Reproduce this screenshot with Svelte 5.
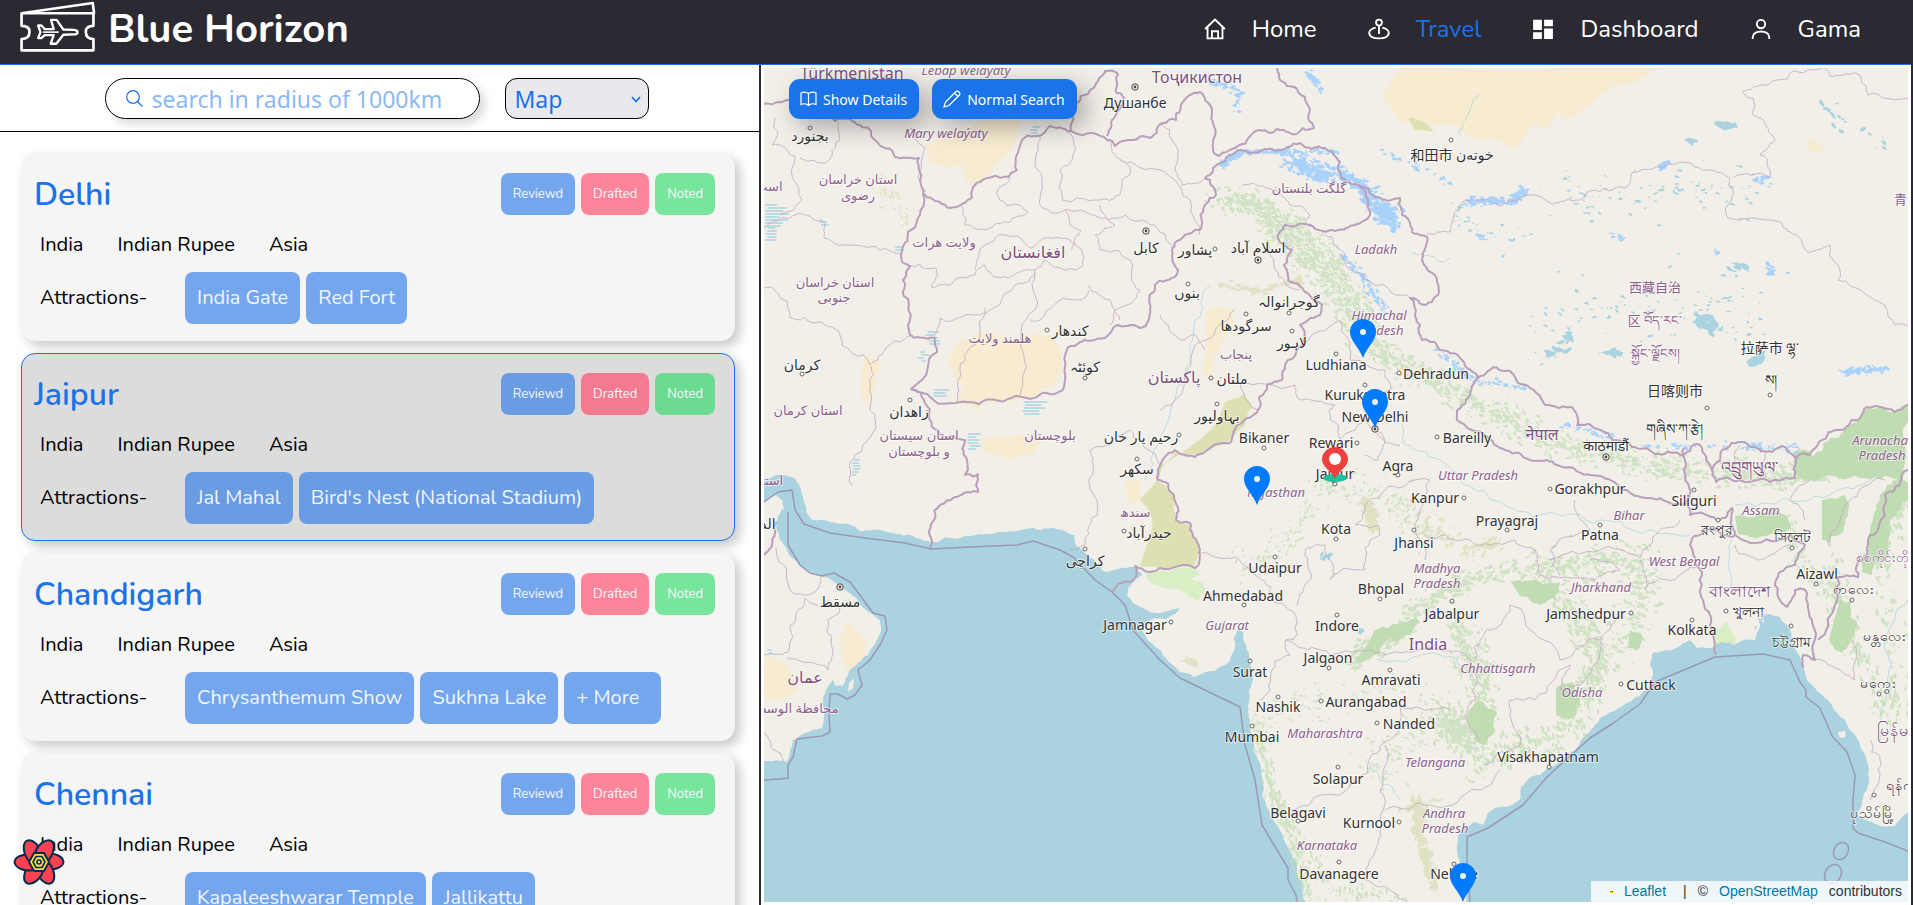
<script>
  const nav = [
    { label: 'Home', icon: 'home' },
    { label: 'Travel', icon: 'travel', active: true },
    { label: 'Dashboard', icon: 'dashboard' },
    { label: 'Gama', icon: 'user' }
  ];

  const places = [
    { name: 'Delhi', attractions: ['India Gate', 'Red Fort'] },
    { name: 'Jaipur', attractions: ['Jal Mahal', "Bird's Nest (National Stadium)"], selected: true },
    { name: 'Chandigarh', attractions: ['Chrysanthemum Show', 'Sukhna Lake'], more: true },
    { name: 'Chennai', attractions: ['Kapaleeshwarar Temple', 'Jallikattu'] }
  ];

  // Seeded generator, so the terrain is the same on every load.
  let seed = 7;
  function rnd() {
    seed = (seed * 16807) % 2147483647;
    return seed / 2147483647;
  }
  const jitter = (n) => (rnd() - 0.5) * 2 * n;

  function points(s) {
    return s.trim().split(/\s+/).map((p) => p.split(',').map(Number));
  }

  // Turns a coarse polyline into a line with natural-looking bends.
  function rough(s, amount = 1) {
    let pts = points(s);
    for (let k = 0; k < 3; k++) {
      const next = [pts[0]];
      for (let i = 1; i < pts.length; i++) {
        const [ax, ay] = pts[i - 1];
        const [bx, by] = pts[i];
        const len = Math.hypot(bx - ax, by - ay);
        if (len > 4) {
          const a = Math.min(len * 0.18, 4) * amount;
          next.push([(ax + bx) / 2 + jitter(a), (ay + by) / 2 + jitter(a)]);
        }
        next.push([bx, by]);
      }
      pts = next;
    }
    return 'M' + pts.map(([x, y]) => x.toFixed(1) + ' ' + y.toFixed(1)).join('L');
  }

  function blob(x, y, size, angle) {
    const n = 7;
    const out = [];
    const c = Math.cos(angle);
    const s = Math.sin(angle);
    for (let i = 0; i < n; i++) {
      const t = (i / n) * Math.PI * 2;
      const r = size * (0.45 + rnd() * 0.8);
      const px = Math.cos(t) * r * 1.5;
      const py = Math.sin(t) * r * 0.7;
      out.push((x + px * c - py * s).toFixed(1) + ' ' + (y + px * s + py * c).toFixed(1));
    }
    return 'M' + out.join('L') + 'Z';
  }

  // Scatters blobs along a polyline, inside a band of the given width.
  function strip(s, width, count, size, angle = 0.6) {
    const pts = points(s);
    let d = '';
    for (let i = 0; i < count; i++) {
      const f = rnd() * (pts.length - 1);
      const k = Math.floor(f);
      const t = f - k;
      const b = pts[Math.min(k + 1, pts.length - 1)];
      const x = pts[k][0] + (b[0] - pts[k][0]) * t + jitter(width) * rnd();
      const y = pts[k][1] + (b[1] - pts[k][1]) * t + jitter(width) * rnd();
      d += blob(x, y, size * (0.4 + rnd()), angle + jitter(0.7));
    }
    return d;
  }

  const iranIndia =
    '764,478 780,475 792,477 800,486 803,497 806,512 812,520 830,522 848,524 860,531 880,530 910,535 925,541 938,542 945,537 960,538 990,534 1010,531 1040,530 1050,528 1062,530 1075,535 1076,545 1083,551 1090,558 1096,562 1103,571 1115,570 1125,568 1134,567 1143,575 1135,580 1128,588 1127,595 1133,603 1150,612 1160,613 1180,607 1177,612 1168,618 1150,620 1140,628 1160,650 1168,661 1180,672 1194,677 1215,671 1230,660 1235,648 1234,637 1237,630 1243,632 1246,645 1249,655 1251,668 1253,680 1249,690 1248,705 1250,720 1254,740 1258,760 1263,785 1266,805 1277,825 1289,850 1297,865 1303,890 1306,904';
  const eastCoast =
    '1466,904 1460,865 1457,850 1458,838 1463,828 1474,822 1483,825 1487,815 1495,808 1510,806 1520,799 1521,787 1530,777 1548,768 1566,757 1580,742 1595,725 1610,712 1630,702 1640,696 1650,686 1653,675 1650,663 1653,653 1665,650 1680,646 1690,640 1697,648 1712,648 1722,640 1735,644 1755,640 1764,622 1766,614 1780,617 1790,630 1792,645 1799,655 1803,668 1812,685 1822,695 1832,705 1845,720 1850,730 1858,740 1865,755 1868,775 1867,790 1862,805 1858,815 1865,820 1880,826 1895,826 1908,812';
  const mainLand =
    rough(iranIndia, 0.6) + rough(eastCoast, 0.6).replace('M', 'L') + 'L1910 66L762 66Z';
  const oman =
    rough('764,502 775,495 782,500 784,508 776,522 780,540 790,556 805,570 825,577 840,585 855,597 866,610 880,620 881,630 874,645 868,655 855,660 848,675 843,686 835,686 833,680 826,690 823,705 824,715 822,728 805,733 793,740 790,750 786,762 764,761', 0.5) + 'Z';

  const deserts = [
    '926,145 985,120 1020,118 1010,150 990,175 975,184 965,180 962,167 930,165',
    '1382,96 1400,68 1662,68 1640,80 1605,92 1590,105 1568,120 1558,112 1548,130 1535,125 1522,140 1515,150 1500,140 1470,138 1455,125 1430,125 1400,122',
    '948,360 960,340 985,330 1010,340 1040,332 1055,338 1062,355 1062,365 1055,385 1030,398 980,402 980,412 955,402 965,388 955,378',
    '865,355 880,360 882,370 875,372 875,390 868,402 860,395 862,375',
    '982,440 1000,437 1020,434 1042,440 1035,452 1010,460 995,455 985,452',
    '1205,312 1222,306 1234,310 1234,325 1218,350 1210,378 1202,372 1206,340',
    '764,658 778,658 790,670 798,690 782,700 764,702',
    '840,638 848,620 866,640 866,655 848,672 842,660',
    '1808,138 1820,142 1824,150 1812,152 1806,145',
    '1124,482 1140,480 1142,500 1130,505'
  ].map((s) => rough(s, 0.5) + 'Z');

  const scrub = [
    '1147,492 1156,482 1160,466 1185,450 1200,440 1215,425 1225,402 1245,394 1252,408 1245,425 1230,440 1198,455 1175,452 1162,468 1158,480 1174,495 1176,520 1190,525 1200,550 1195,565 1160,569 1140,566 1150,540 1152,518 1140,500',
    '1408,118 1425,122 1434,132 1415,130'
  ].map((s) => rough(s, 0.5) + 'Z');

  const greens = [
    '1793,452 1812,456 1830,438 1850,425 1870,408 1890,412 1908,406 1908,500 1890,520 1880,540 1870,530 1880,500 1898,480 1860,478 1820,480 1796,475',
    '1735,516 1765,514 1785,515 1790,525 1778,535 1755,539 1738,535',
    '1510,580 1535,580 1560,582 1556,600 1540,605 1520,596',
    '1478,700 1492,708 1495,730 1485,745 1470,728 1468,712',
    '1822,500 1845,495 1845,520 1830,548 1822,540',
    '1840,600 1853,600 1850,640 1835,650 1830,635',
    '1875,510 1885,515 1885,560 1872,575 1862,572 1868,540',
    '1556,690 1572,682 1580,700 1568,720 1556,715',
    '1370,640 1400,625 1420,622 1400,640 1375,655 1355,662',
    '1630,630 1642,636 1638,650 1628,648'
  ].map((s) => rough(s, 1.4) + 'Z');

  const limes = [
    '1160,570 1195,566 1200,575 1192,580 1206,588 1198,602 1180,590 1165,588 1150,582 1145,574',
    '1716,632 1728,622 1736,640 1734,646 1716,644'
  ].map((s) => rough(s, 0.8) + 'Z');

  const forest =
    strip('1220,200 1260,205 1285,235 1310,260 1345,310 1375,350 1420,375 1470,400 1530,432 1590,455', 20, 1300, 1.7) +
    strip('1285,215 1330,260 1350,290 1380,340', 20, 340, 1.7) +
    strip('1600,455 1680,470 1780,478 1830,470', 18, 480, 1.8, 0.2) +
    strip('1350,660 1390,640 1430,600 1470,580 1560,560', 16, 380, 2.1, -0.5) +
    strip('1455,625 1480,680 1475,740 1440,720 1490,765 1580,720 1600,650 1560,600', 26, 950, 2.1, 1) +
    strip('1530,590 1580,560 1640,560 1640,620 1580,690', 28, 460, 1.9, 0.3) +
    strip('1255,720 1272,790 1290,830 1310,900', 11, 300, 1.7, 1.4) +
    strip('1300,840 1330,890 1400,900', 16, 120, 1.6, 1.4) +
    strip('1370,780 1400,740 1440,700', 34, 150, 1.4, 0.4) +
    strip('1260,720 1320,700 1390,690', 26, 130, 1.3, 0.2) +
    strip('1830,560 1850,640 1900,720 1880,560 1905,500', 20, 300, 2.1, 1.4) +
    strip('1240,570 1290,540 1330,480', 24, 150, 1.3, -0.8) +
    strip('1320,480 1400,500 1420,530', 28, 140, 1.5, -0.8) +
    strip('1790,520 1800,560 1830,600', 14, 90, 1.6, 1.4);
  const hills =
    strip('1420,800 1420,840 1435,890', 8, 150, 3, 1.5) +
    strip('1410,520 1470,550 1500,540', 14, 90, 2.2, -0.5) +
    strip('1365,500 1375,530', 9, 60, 3, 1.2) +
    strip('1220,285 1260,290 1300,280', 6, 80, 2.2, 0) +
    strip('1185,660 1200,665', 6, 14, 2.4, 0) +
    strip('1440,800 1400,810', 6, 20, 2.4, -0.3) +
    strip('880,180 910,230', 16, 50, 1.4, 0.8);
  const glacier =
    strip('1222,165 1240,152 1280,152 1340,152', 5, 150, 1.8, 0) +
    strip('1290,160 1310,170 1350,178 1380,208 1395,222', 13, 560, 2, 0.3) +
    strip('1342,255 1365,280 1385,310', 6, 90, 1.6, 0.8) +
    strip('1435,348 1470,380 1530,388', 7, 80, 1.7, 0.4) +
    strip('1468,202 1510,202 1525,190', 6, 160, 1.9, 0) +
    strip('1210,80 1240,90 1235,112', 6, 50, 1.9, 0) +
    strip('1308,72 1322,90', 5, 40, 1.9, 0.4) +
    strip('1640,447 1740,445 1800,450', 6, 70, 1.7, 0.2) +
    strip('1560,425 1620,438', 5, 34, 1.7, 0.2) +
    strip('1842,372 1885,368', 6, 56, 2, 0) +
    strip('1380,150 1400,160 1450,180', 8, 22, 1.9, 0) +
    strip('1660,168 1668,162', 3, 18, 2.2, -0.4) +
    strip('1768,262 1772,276', 4, 16, 2.2, 0) +
    strip('1755,182 1770,176', 4, 14, 2, 0) +
    strip('1610,234 1622,238', 3, 8, 2, 0) +
    strip('1715,250 1718,256', 3, 8, 2, 0) +
    strip('1480,235 1486,240', 4, 10, 1.8, 0);
  const lakes =
    strip('1560,190 1620,200 1700,185 1760,200', 34, 90, 1.6, 0.1) +
    strip('1540,320 1600,310 1690,300 1780,310', 60, 110, 1.5, 0.3) +
    strip('1700,320 1712,328', 10, 26, 4, 0.2) +
    strip('1608,352 1620,354', 4, 8, 4, 0.1) +
    strip('1750,362 1762,358', 5, 12, 4, -0.3) +
    strip('1718,124 1732,126', 3, 12, 3.6, 0.1) +
    strip('1690,141 1696,142', 3, 6, 3, 0.1) +
    strip('1730,270 1748,265', 8, 14, 2.6, 0.3) +
    strip('1820,105 1845,122 1900,150', 14, 18, 2.2, 0.4) +
    strip('1450,200 1480,230 1520,240', 20, 30, 1.6, -0.2) +
    strip('1540,355 1570,345 1570,330', 8, 12, 3, 0.1) +
    strip('1322,558 1330,556', 5, 10, 2.2, -0.9) +
    strip('1358,632 1362,628', 4, 8, 2, -0.9) +
    strip('1760,620 1770,645', 8, 18, 2.4, 1.2);

  // Dashed salt flats, drawn as short horizontal strokes.
  const flats = [
    [764, 205, 24, 8], [764, 228, 12, 5], [818, 222, 8, 2], [895, 247, 10, 2], [925, 332, 12, 5],
    [918, 352, 8, 4], [932, 390, 22, 3], [1022, 402, 24, 5], [966, 434, 14, 6], [850, 460, 8, 6], [1030, 127, 9, 4], [767, 650, 6, 2]
  ]
    .map(([x, y, w, n]) => {
      let d = '';
      for (let i = 0; i < n; i++) d += `M${(x + rnd() * 4).toFixed(1)} ${y + i * 3}h${(w * (0.5 + rnd() * 0.5)).toFixed(1)}`;
      return d;
    })
    .join('');

  const countries = [
    '764,104 787,100 835,121 860,125 875,140 895,157 919,158 920,180 923,194 920,215 908,232 902,250 902,262 910,266 903,280 909,305 910,335 935,338 937,352 911,389 925,403 930,420 945,438 965,440 965,475 978,474 978,492 955,497 940,505 934,520 931,549',
    '923,194 935,201 950,208 962,204 972,197 975,185 1000,178 1017,170 1022,140 1045,132 1050,126 1071,131 1090,133 1105,138 1115,146 1130,140 1150,138 1160,124 1176,120 1190,95 1200,92 1210,105 1213,140 1219,156 1240,145 1260,130 1280,130 1297,134 1314,128 1310,110 1305,97 1294,87 1280,80 1277,68',
    '1071,131 1072,108 1090,90 1106,70',
    '1104,72 1118,74 1116,92 1124,98 1112,120 1107,136',
    '911,389 955,403 1000,401 1012,398 1030,399 1064,387 1067,350 1080,342 1105,338 1118,325 1140,328 1150,310 1155,285 1178,270 1172,250 1180,240 1200,230 1205,205 1216,195 1210,180 1205,178 1220,163 1240,150 1265,149 1285,149 1300,143 1325,148 1340,162 1341,178 1358,185 1375,197 1400,198 1402,215 1412,232 1427,237 1422,260 1435,275 1438,295 1425,305 1410,298 1420,325 1422,340 1432,342 1440,350 1462,360 1478,378 1490,370 1510,371 1530,388 1545,405 1558,408 1572,407 1577,425 1600,430 1612,440 1632,447 1655,454 1680,455 1700,445 1706,460 1712,470 1722,450 1738,442 1755,447 1772,452 1782,446 1795,457 1810,455 1822,440 1840,430 1860,418 1875,406 1895,412 1908,405',
    '1478,378 1470,395 1462,405 1457,420 1485,435 1500,448 1530,460 1560,466 1590,475 1623,490 1650,498 1670,503 1688,500 1685,480 1684,448',
    '1358,185 1368,200 1370,215 1355,225 1335,231 1310,225 1285,225 1278,238 1292,250 1284,265 1288,280 1305,292 1322,305 1320,315 1300,325 1302,345 1285,365 1282,380 1267,385 1258,410 1238,425 1230,443 1195,457 1175,450 1160,466 1158,480 1174,495 1176,520 1190,523 1200,550 1195,568 1160,568 1135,566 1135,578 1122,583 1112,592',
    '1686,500 1690,515 1720,520 1732,508 1735,535 1705,528 1690,545 1702,572 1703,600 1710,625 1716,655',
    '1735,535 1765,540 1790,535 1805,545 1795,565 1780,572 1775,585 1780,600 1787,607 1795,590 1805,590 1812,620 1815,660 1803,655 1803,668',
    '1908,470 1900,485 1885,495 1885,515 1870,535 1860,560 1858,577 1838,577 1835,605 1818,640',
    '1712,470 1716,482 1740,480 1770,482 1795,478 1797,457',
    '776,522 772,545 764,555'
  ].map((s) => rough(s));

  const maritime = [
    '764,502 778,492 792,490 795,510 804,524 830,533 865,538 905,543 931,549 970,547 1017,545 1033,541 1060,550 1073,557 1095,580 1112,592 1125,605 1133,630 1160,660 1180,678 1240,707 1245,745 1255,780 1262,825 1280,855 1288,868 1288,880 1296,895 1297,902',
    '788,512 788,545 800,565 810,573 822,576 834,573 850,582 862,598 873,613 885,616 887,630 880,645 870,660 858,670 862,685 855,695 847,699 838,694 830,694 829,715 830,732 822,736 797,739 793,757 788,765 788,778 780,779 764,780',
    '1470,902 1467,860 1467,837 1488,828 1523,805 1547,777 1590,738 1612,724 1640,704 1655,682 1715,657 1763,654 1790,660 1800,682 1806,690 1806,697 1820,708 1832,736 1847,752 1855,775 1853,800 1853,828 1858,833 1885,842 1908,851'
  ].map((s) => 'M' + s.replace(/ /g, 'L'));

  const regions = [
    '764,228 780,218 800,213 822,220 824,238 850,245 880,250 902,252',
    '764,288 780,298 790,318 820,322 840,335 870,365 885,350 910,336',
    '871,366 870,410 875,430 855,455 852,485',
    '775,118 772,145 795,156 802,200 780,215',
    '838,122 840,140 830,159 800,158',
    '910,128 925,148 926,192',
    '907,266 936,268 932,288 950,285 975,275 985,265 1000,278 1020,272 1035,270 1045,260 1080,268 1082,250 1070,240 1045,238 1030,248 1005,235 985,245 975,270',
    '1035,270 1035,310 1022,325 1020,395',
    '934,338 940,318 975,315 990,310 1015,285 1035,272',
    '985,308 975,345 960,370 957,402',
    '962,206 965,225 985,230 1010,222 1028,212 1020,205 1000,200 998,190 1010,178',
    '1040,134 1035,165 1042,178 1040,205 1065,210 1070,225 1080,230 1072,250',
    '1068,132 1072,160 1060,170 1062,200 1100,200 1120,195 1130,175 1115,155 1110,140',
    '1120,160 1160,170 1190,200 1200,235',
    '1160,125 1172,140 1175,170 1182,185 1205,178',
    '1100,205 1115,225 1095,235 1100,250 1130,260 1140,290 1115,310 1110,325',
    '1065,210 1100,218 1125,215 1150,225 1172,250',
    '1088,290 1080,300 1060,300 1040,320 1030,320',
    '1088,285 1110,300 1120,320',
    '1160,315 1185,340 1195,335 1205,350',
    '1160,466 1130,430 1110,445 1090,450 1090,490 1098,515 1085,545 1070,550',
    '1235,310 1215,330 1195,345 1175,400 1160,410',
    '1268,240 1275,270 1300,290',
    '1242,185 1275,190 1290,205 1310,215 1305,224',
    '1322,232 1335,245 1350,270 1375,285 1400,295 1410,298',
    '1258,410 1240,384 1295,385 1300,400 1335,405 1330,420 1340,440 1365,420 1378,435 1400,445',
    '1302,345 1340,320 1350,360 1385,370 1390,390 1365,400',
    '1375,430 1385,440 1378,460 1365,455',
    '1200,553 1235,557 1262,580 1272,600 1290,610 1297,635 1286,640 1290,655 1275,660 1270,690 1260,700',
    '1297,605 1310,580 1305,550 1325,545 1335,575 1330,580 1345,568 1365,570 1370,540 1380,535 1378,525 1355,525 1365,505 1385,490 1430,480 1425,500 1415,530 1425,545 1425,560',
    '1425,535 1460,540 1480,545 1515,540 1535,550 1540,575 1590,580 1620,570 1590,560',
    '1286,640 1330,655 1370,650 1385,655 1440,650 1470,660 1475,700 1465,715 1480,740',
    '1620,615 1600,640 1560,660 1510,605 1500,625 1480,640 1475,660',
    '1600,640 1585,680 1560,690 1570,665 1535,700 1510,700 1520,745 1485,765',
    '1290,810 1320,795 1360,780 1380,750 1395,735 1400,705 1450,710',
    '1385,745 1385,800 1380,830 1370,860 1365,880 1390,890 1420,905',
    '1385,810 1430,805 1480,790 1500,770',
    '1575,500 1590,530 1550,550 1560,575',
    '1550,560 1600,550 1640,558 1660,530 1680,520',
    '1640,560 1645,590 1680,575 1700,565',
    '1735,545 1760,560 1790,545',
    '1740,445 1735,462 1738,478',
    '1765,450 1762,464 1766,478',
    '1810,480 1790,500 1805,520',
    '1830,545 1840,520 1850,500 1885,480',
    '1853,640 1855,680 1840,670 1810,660',
    '1870,740 1880,760 1870,800',
    '1427,234 1450,232 1460,205 1480,200 1500,206 1530,195 1558,203 1580,200 1605,188 1625,188 1633,172 1660,168 1690,163 1710,170 1730,178 1728,185 1733,190 1725,210 1728,218 1768,220 1790,232 1808,253 1830,245 1838,265 1838,280 1860,290 1885,305 1895,325 1908,326',
    '1733,178 1770,178 1768,160 1760,155 1775,140 1765,122 1753,115 1753,98 1743,92 1760,85 1808,70 1825,68 1830,76 1860,75 1868,95 1908,98',
    '776,548 790,590 815,592 820,577',
    '764,655 788,652 790,625 805,598 818,606',
    '787,658 828,670 833,655 828,620 840,608',
    '764,732 784,761'
  ].map((s) => rough(s, 1.1));

  const rivers = [
    '1210,285 1195,320 1192,360 1175,400 1165,430 1145,480',
    '1402,425 1410,445 1440,460 1465,485 1500,502 1540,515 1600,520 1650,530 1690,535',
    '1732,540 1732,580 1728,590',
    '1735,505 1780,500 1830,495 1870,480 1900,470',
    '1400,800 1380,780 1370,765',
    '1380,660 1440,655 1470,680',
    '1412,252 1445,262 1450,258',
    '1908,600 1885,640 1885,700 1880,740',
    '1480,95 1465,120 1460,135'
  ].map((s) => rough(s, 1.2));

  const labels = [
    ['n', 'Türkmenistan', 852, 79], ['s', 'Lebap welaýaty', 966, 75], ['s', 'Mary welaýaty', 946, 138],
    ['n', 'Тоҷикистон', 1197, 83], ['c', 'Душанбе', 1135, 108], ['c', 'بجنورد', 810, 141],
    ['p', 'استان خراسان', 858, 184], ['p', 'رضوی', 858, 200], ['p', 'استان خراسان', 835, 287], ['p', 'جنوبی', 834, 302],
    ['p', 'ولایت هرات', 944, 247], ['n', 'افغانستان', 1033, 258], ['c', 'کابل', 1146, 253],
    ['c', 'کندهار', 1070, 336], ['p', 'هلمند ولایت', 1000, 343], ['c', 'کوئٹہ', 1085, 372], ['c', 'کرمان', 802, 370],
    ['p', 'استان کرمان', 808, 415], ['c', 'زاهدان', 909, 417], ['p', 'استان سیستان', 919, 440], ['p', 'و بلوچستان', 919, 456],
    ['p', 'بلوچستان', 1050, 440], ['n', 'پاکستان', 1174, 383], ['c', 'رحیم یار خان', 1141, 442], ['c', 'سکهر', 1137, 474],
    ['p', 'سندھ', 1135, 517], ['c', 'حیدرآباد', 1149, 538], ['c', 'کراچی', 1085, 566], ['c', 'مسقط', 840, 607],
    ['n', 'عمان', 805, 683], ['p', 'محافظة الوسطى', 792, 713], ['c', 'الد', 768, 529], ['p', 'استا', 772, 485], ['p', 'است', 769, 191],
    ['p', 'گلگت بلتستان', 1309, 193], ['c', 'اسلام آباد', 1258, 253], ['c', 'پشاور', 1195, 255], ['c', 'بنوں', 1187, 298],
    ['c', 'گوجرانوالہ', 1289, 307], ['c', 'سرگودها', 1246, 331], ['c', 'لاہور', 1292, 348], ['p', 'پنجاب', 1236, 359],
    ['c', 'ملتان', 1232, 384], ['c', 'بہاولپور', 1217, 421], ['c', '和田市 خوتەن', 1452, 160], ['s', 'Ladakh', 1376, 254],
    ['s', 'Himachal', 1379, 320], ['s', 'Pradesh', 1380, 335], ['c', 'Ludhiana', 1336, 370], ['c', 'Dehradun', 1436, 379],
    ['c', 'Kurukshetra', 1365, 400], ['c', 'New Delhi', 1375, 422], ['c', 'Bareilly', 1467, 443], ['c', 'Bikaner', 1264, 443],
    ['c', 'Rewari', 1331, 448], ['c', 'Jaipur', 1335, 479], ['c', 'Agra', 1398, 471], ['s', 'Uttar Pradesh', 1478, 480],
    ['n', 'नेपाल', 1542, 440], ['c', 'काठमाडौं', 1606, 451], ['p', '西藏自治', 1655, 292], ['p', '区 བོད་རང་', 1655, 325], ['p', 'སྐྱོང་ལྗོངས།', 1655, 358],
    ['c', '拉萨市 ལྷ་', 1770, 353], ['c', 'ས།', 1771, 385], ['c', '日喀则市', 1675, 396], ['c', 'གཞིས་ཀ་རྩེ།', 1674, 434],
    ['n', 'འབྲུགཡུལ་', 1749, 473], ['s', 'Arunacha', 1880, 445], ['s', 'Pradesh', 1882, 460], ['p', '青海', 1907, 204],
    ['s', 'Rajasthan', 1276, 497], ['c', 'Kota', 1336, 534], ['c', 'Udaipur', 1275, 573], ['c', 'Ahmedabad', 1243, 601],
    ['s', 'Gujarat', 1227, 630], ['c', 'Jamnagar', 1135, 630], ['c', 'Surat', 1250, 677], ['c', 'Nashik', 1278, 712], ['c', 'Mumbai', 1252, 742],
    ['s', 'Maharashtra', 1325, 738], ['c', 'Aurangabad', 1366, 707], ['c', 'Nanded', 1409, 729], ['c', 'Jalgaon', 1328, 663],
    ['c', 'Amravati', 1391, 685], ['c', 'Indore', 1337, 631], ['c', 'Bhopal', 1381, 594], ['s', 'Madhya', 1437, 573], ['s', 'Pradesh', 1437, 588],
    ['c', 'Jabalpur', 1452, 619], ['n', 'India', 1428, 650], ['s', 'Chhattisgarh', 1498, 673], ['c', 'Kanpur', 1435, 503],
    ['c', 'Prayagraj', 1507, 526], ['c', 'Jhansi', 1414, 548], ['c', 'Solapur', 1338, 784], ['s', 'Telangana', 1435, 767],
    ['c', 'Visakhapatnam', 1548, 762], ['c', 'Belagavi', 1298, 818], ['c', 'Kurnool', 1369, 828], ['s', 'Andhra', 1444, 818], ['s', 'Pradesh', 1445, 833],
    ['s', 'Karnataka', 1327, 850], ['c', 'Davanagere', 1339, 879], ['c', 'Nellore', 1454, 879], ['c', 'Gorakhpur', 1590, 494],
    ['s', 'Bihar', 1629, 520], ['c', 'Patna', 1600, 540], ['c', 'Siliguri', 1694, 506], ['s', 'Assam', 1761, 515], ['c', 'রংপুর', 1717, 535],
    ['c', 'সিলেট', 1792, 542], ['s', 'West Bengal', 1684, 566], ['c', 'Aizawl', 1817, 579], ['s', 'Jharkhand', 1601, 592],
    ['n', 'বাংলাদেশ', 1739, 597], ['c', 'খুলনা', 1748, 617], ['c', 'Jamshedpur', 1586, 619], ['c', 'Kolkata', 1692, 635], ['c', 'চট্টগ্রাম', 1791, 647],
    ['c', 'Cuttack', 1651, 690], ['s', 'Odisha', 1582, 697], ['c', 'ကလေး', 1853, 594], ['c', 'မန္တလေး', 1884, 641], ['p', 'စစ်ကိုင်းတိုင်း', 1888, 562],
    ['c', 'မကွေး', 1878, 688], ['n', 'မြန်မာ', 1896, 736], ['c', 'ရန်ကုန်', 1906, 790], ['c', 'ပုသိမ်မြို့', 1872, 818]
  ];

  const towns = [
    [810, 128], [802, 374], [910, 400], [1047, 330], [1085, 378], [1137, 459], [1124, 531], [1085, 549], [1215, 249], [1188, 284],
    [1246, 314], [1289, 313], [1292, 331], [1211, 378], [1217, 404], [1179, 435], [1451, 140], [1336, 354], [1399, 373], [1365, 385],
    [1437, 437], [1264, 448], [1357, 443], [1398, 475], [1335, 484], [1464, 498], [1550, 489], [1507, 530], [1414, 530], [1336, 539],
    [1275, 557], [1244, 605], [1171, 622], [1250, 661], [1278, 697], [1252, 726], [1321, 701], [1377, 723], [1329, 668], [1390, 670],
    [1337, 615], [1380, 599], [1452, 601], [1338, 767], [1549, 767], [1298, 821], [1399, 822], [1339, 862], [1454, 864], [1600, 525],
    [1694, 490], [1718, 520], [1792, 548], [1816, 584], [1726, 611], [1631, 613], [1692, 620], [1791, 626], [1621, 684], [1852, 600],
    [1879, 694], [1874, 795], [1707, 408], [1770, 395]
  ];
  const capitals = [[1135, 87], [1146, 231], [1258, 260], [840, 587], [1375, 429], [1606, 457]];
  const pins = [[1363, 358], [1375, 428], [1257, 505], [1463, 902]];
  const petals = [0, 60, 120, 180, 240, 300];
</script>

<div class="page">
  <header>
    <a class="brand" href="#home">
      <svg class="ticket" viewBox="57 0 231 160" aria-hidden="true">
        <g fill="none" stroke="#fff" stroke-width="8" stroke-linejoin="round">
          <path d="M64 40L279 9L283 41" />
          <path d="M64 40H281V78Q258 78 258 96Q258 118 281 118V152H64V118Q88 118 88 96Q88 78 64 78Z" />
          <path stroke-width="7" d="M222 90Q233 91 233 97Q233 104 222 104L190 105L169 132H152L161 106H134L124 115H114L121 97L114 77H124L134 88H161L153 60H170L190 89Z" />
          <path stroke-width="5" d="M128 97H176" />
        </g>
      </svg>
      <span>Blue Horizon</span>
    </a>
    <nav>
      {#each nav as item}
        <a href="#{item.icon}" class:active={item.active}>
          <svg viewBox="0 0 20 20" width="22" height="22" aria-hidden="true" fill="none" stroke="#fff" stroke-width="1.7">
            {#if item.icon === 'home'}
              <path d="M1 10L10 1.5L19 10M3.200 8V18.500H16.800V8M7.200 18V12H12.800V18" />
            {:else if item.icon === 'travel'}
              <circle cx="10" cy="4.200" r="2.700" />
              <path d="M10 7V14.500M7 8.800C-1.500 10.500 -1 18.500 10 18.500S21.500 10.500 13 8.800" />
            {:else if item.icon === 'dashboard'}
              <path fill="#fff" stroke="none" d="M1 1.500H9V11H1ZM1 13H9V19H1ZM11 1.500H19V7.500H11ZM11 9.500H19V19H11Z" />
            {:else}
              <circle cx="10" cy="5.500" r="3.800" />
              <path d="M2.500 19V17.500C2.500 10.500 17.500 10.500 17.500 17.500V19" />
            {/if}
          </svg>
          <span>{item.label}</span>
        </a>
      {/each}
    </nav>
  </header>

  <main>
    <section class="side">
      <form class="tools">
        <label class="search">
          <svg viewBox="0 0 17 17" width="17" height="17" aria-hidden="true" fill="none" stroke="#1a73e8" stroke-width="1.2">
            <circle cx="7" cy="7" r="6.3" />
            <path d="M11.500 11.500L16.500 16.500" />
          </svg>
          <input type="text" aria-label="Search" placeholder="search in radius of 1000km" />
        </label>
        <div class="mode">
          <select aria-label="View">
            <option>Map</option>
          </select>
          <svg viewBox="0 0 10 7" width="10" height="7" aria-hidden="true" fill="none" stroke="#1a73e8" stroke-width="1.7">
            <path d="M1 1L5 5.500L9 1" />
          </svg>
        </div>
      </form>

      <div class="list">
        {#each places as place}
          <article class:selected={place.selected}>
            <div class="head">
              <h2>{place.name}</h2>
              <div class="tags">
                <button class="tag blue">Reviewd</button>
                <button class="tag pink">Drafted</button>
                <button class="tag green">Noted</button>
              </div>
            </div>
            <div class="facts">
              <span>India</span>
              <span>Indian Rupee</span>
              <span>Asia</span>
            </div>
            <div class="sights">
              <span class="caption">Attractions-</span>
              {#each place.attractions as a}
                <span class="chip">{a}</span>
              {/each}
              {#if place.more}
                <button class="chip more">+ More</button>
              {/if}
            </div>
          </article>
        {/each}
      </div>
    </section>

    <section class="map">
      <svg class="canvas" viewBox="764 68 1144 834" preserveAspectRatio="xMidYMid slice" role="img" aria-label="Map of South Asia">
        <rect x="764" y="68" width="1144" height="834" fill="#aad3df" />
        <path d={mainLand} fill="#f2efe9" />
        <path d={oman} fill="#f2efe9" />
        {#each deserts as d}<path {d} fill="#f7ecd1" />{/each}
        {#each scrub as d}<path {d} fill="#dde0b1" />{/each}
        {#each limes as d}<path {d} fill="#d9eec4" />{/each}
        {#each greens as d}<path {d} fill="#c0dcb2" />{/each}
        <path d={hills} fill="#dae0ba" opacity="0.8" />
        <path d={forest} fill="#c3deb5" opacity="0.75" />
        <path d={lakes} fill="#aad3df" />
        <path d={flats} stroke="#aad3df" stroke-width="1.3" />
        <g fill="none" stroke="#aad3df" opacity="0.7">{#each rivers as d}<path {d} />{/each}</g>
        <path d={glacier} fill="#a9d2fb" />
        <path d="M849 683L854 678L853 688L848 692ZM1838 732L1845 731L1846 737L1840 738Z" fill="#f2efe9" />
        <g fill="none" stroke="#c3a9c3" opacity="0.8">{#each regions as d}<path {d} />{/each}</g>
        <g fill="none" stroke="#b8a0ba" stroke-width="2" stroke-linejoin="round">{#each countries as d}<path {d} />{/each}</g>
        <g fill="none" stroke="#9a98b6" stroke-width="1.5" stroke-linejoin="round">
          {#each maritime as d}<path {d} />{/each}
          <ellipse cx="1841" cy="851" rx="7" ry="9" transform="rotate(30 1841 851)" />
          <ellipse cx="1833" cy="874" rx="8" ry="10" transform="rotate(30 1833 874)" />
        </g>

        {#each labels as [kind, text, x, y]}
          <text class={kind} {x} {y}>{text}</text>
        {/each}
        <g fill="#f8f6f2" stroke="#6a6a68">
          {#each towns as [cx, cy]}<circle {cx} {cy} r="2" />{/each}
        </g>
        {#each capitals as [cx, cy]}
          <circle {cx} {cy} r="3.2" fill="#f8f6f2" stroke="#444" />
          <circle {cx} {cy} r="1.4" fill="#444" />
        {/each}

        <ellipse cx="1335" cy="478" rx="12" ry="4" fill="#1fbf9c" />
        <path d="M1335 479C1331 470 1322 467 1322 459.500A13 12.500 0 0 1 1348 459.500C1348 467 1339 470 1335 479Z" fill="#ee4040" />
        <circle cx="1335" cy="459" r="6" fill="#fff" />
        {#each pins as [x, y]}
          <path
            fill="#007bff"
            d="M{x} {y}C{x - 4} {y - 11} {x - 13} {y - 17} {x - 13} {y - 26}A13 13 0 0 1 {x + 13} {y - 26}C{x + 13} {y - 17} {x + 4} {y - 11} {x} {y}Z"
          />
          <circle cx={x} cy={y - 26} r="3" fill="#eef0ee" />
        {/each}
      </svg>

      <div class="actions">
        <button>
          <svg viewBox="0 0 17 16" width="17" height="16" aria-hidden="true" fill="none" stroke="#fff" stroke-width="1.2">
            <path d="M8.500 2.500C6.500 1 3 1 1 2V13.500C3 12.500 6.500 12.500 8.500 14.500C10.500 12.500 14 12.500 16 13.500V2C14 1 10.500 1 8.500 2.500ZM8.500 2.500V14" />
          </svg>
          Show Details
        </button>
        <button>
          <svg viewBox="0 0 18 18" width="18" height="18" aria-hidden="true" fill="none" stroke="#fff" stroke-width="1.2">
            <path d="M1 17L2.500 12L13 1.500Q14.500 .5 16 2Q17.500 3.500 16.500 5L6 15.500ZM11.500 3L15 6.500" />
          </svg>
          Normal Search
        </button>
      </div>

      <footer>
        <svg viewBox="0 0 3 2" width="3" height="2" aria-hidden="true"><path fill="#4c7be1" d="M0 0H3V1H0Z" /><path fill="#ffd500" d="M0 1H3V2H0Z" /></svg>
        <a href="#leaflet">Leaflet</a>
        <span class="bar">|</span>
        <span class="copy">©</span>
        <a href="#osm">OpenStreetMap</a>
        <span>contributors</span>
      </footer>
    </section>
  </main>

  <button class="devtools" aria-label="Open query devtools">
    <svg viewBox="-26 -23 52 46" width="52" height="46" aria-hidden="true">
      {#each petals as r}
        <path transform="rotate({r})" d="M6 -8C14 -10 24 -6 24.500 0C24 6 14 9 3 7Z" fill="#ff4154" stroke="#002c4b" stroke-width="2" stroke-linejoin="round" />
      {/each}
      <path d="M-5 -9H5L10 0L5 9H-5L-10 0Z" fill="#ffd94c" stroke="#002c4b" stroke-width="2" />
      <path d="M-3 -5.500H3L6 0L3 5.500H-3L-6 0Z" fill="#ffd94c" stroke="#002c4b" stroke-width="1.6" />
      <circle r="2" fill="#ffd94c" stroke="#002c4b" stroke-width="1.6" />
    </svg>
  </button>
</div>

<style>
  :global(body) {
    margin: 0;
  }
  .page {
    box-sizing: border-box;
    height: 100vh;
    display: flex;
    flex-direction: column;
    overflow: hidden;
    background: #fff;
    border-right: 2px solid #2b2a33;
    font-family: 'Nunito', 'Open Sans', 'Noto Sans', sans-serif;
    color: #000;
  }
  a {
    text-decoration: none;
  }
  button,
  input,
  select {
    font-family: inherit;
    margin: 0;
  }
  header {
    box-sizing: border-box;
    flex: none;
    height: 65px;
    display: flex;
    justify-content: space-between;
    align-items: center;
    padding: 0 50px 7px 19px;
    background: #2b2a33;
    border-bottom: 1px solid #1a73e8;
  }
  .brand {
    display: flex;
    align-items: center;
    gap: 12px;
    color: #fff;
    font-size: 40px;
    line-height: 52px;
    font-weight: 700;
  }
  .ticket {
    width: 77px;
    height: 53px;
    margin-bottom: 4px;
  }
  nav {
    display: flex;
    gap: 51px;
  }
  nav a {
    display: flex;
    align-items: center;
    gap: 26px;
    color: #fff;
    font-size: 24px;
    line-height: 32px;
  }
  nav a.active {
    color: #1a73e8;
  }
  main {
    flex: 1;
    min-height: 0;
    display: grid;
    grid-template-columns: 761fr 1150fr;
  }
  .side {
    min-width: 0;
    min-height: 0;
    display: flex;
    flex-direction: column;
    border-right: 2px solid #2b2a33;
  }
  .tools {
    flex: none;
    display: flex;
    justify-content: center;
    gap: 25px;
    padding: 13px 6px 12px 0;
    border-bottom: 1px solid #000;
  }
  .search {
    box-sizing: border-box;
    width: 375px;
    height: 41px;
    display: flex;
    align-items: center;
    gap: 9px;
    padding: 0 20px;
    border: 1px solid #000;
    border-radius: 21px;
    box-shadow: 5px 5px 10px rgba(0, 0, 0, 0.15);
    background: #fff;
  }
  .search svg {
    flex: none;
  }
  .search input {
    flex: 1;
    min-width: 0;
    padding: 0;
    border: 0;
    outline: 0;
    background: none;
    font-family: 'Noto Sans', sans-serif;
    font-size: 23px;
    line-height: 32px;
    color: #1a73e8;
  }
  .search input::placeholder {
    color: #8cb9f4;
    opacity: 1;
  }
  .mode {
    position: relative;
    width: 144px;
    height: 41px;
  }
  .mode select {
    box-sizing: border-box;
    width: 100%;
    height: 100%;
    padding: 0 24px 0 9px;
    appearance: none;
    border: 1px solid #000;
    border-radius: 12px;
    background: #e9e9ed;
    color: #1a73e8;
    font-family: 'Noto Sans', sans-serif;
    font-size: 23px;
  }
  .mode svg {
    position: absolute;
    right: 8px;
    top: 18px;
    pointer-events: none;
  }
  .list {
    flex: 1;
    min-height: 0;
    overflow: hidden;
    display: flex;
    flex-direction: column;
    gap: 12px;
    padding: 21px 24px 0 21px;
  }
  article {
    box-sizing: border-box;
    flex: none;
    padding: 19px 19px 16px 12px;
    border: 1px solid #f5f5f5;
    border-radius: 14px;
    background: #f5f5f5;
    box-shadow: 5px 5px 12px rgba(0, 0, 0, 0.22);
  }
  article.selected {
    border-color: #1a73e8;
    background: #dcdcdc;
  }
  .head {
    display: flex;
    justify-content: space-between;
    height: 42px;
  }
  h2 {
    margin: 0;
    color: #1a73e8;
    font-size: 32px;
    font-weight: 600;
    line-height: 44px;
  }
  .tags {
    display: flex;
    gap: 6px;
  }
  .tag {
    padding: 0 12px;
    border: 0;
    border-radius: 8px;
    color: #f2f7fd;
    font-size: 13px;
    line-height: 42px;
  }
  .blue,
  .chip {
    background: #74a6ee;
  }
  .pink {
    background: #fd8499;
  }
  .green {
    background: #77e59c;
  }
  .selected .blue,
  .selected .chip {
    background: #699ce3;
  }
  .selected .pink {
    background: #f37a8f;
  }
  .selected .green {
    background: #6cdb92;
  }
  .facts {
    display: flex;
    gap: 34px;
    padding: 16px 6px 14px 6px;
    font-size: 20px;
    line-height: 27px;
  }
  .sights {
    display: flex;
    align-items: center;
    gap: 6px;
    padding-left: 6px;
    font-size: 20px;
    line-height: 52px;
  }
  .caption {
    width: 139px;
  }
  .chip {
    padding: 0 12px;
    border: 0;
    border-radius: 8px;
    color: #f0f5fd;
    font-size: 20px;
    line-height: 52px;
    white-space: nowrap;
  }
  .more {
    padding-right: 22px;
  }
  .map {
    position: relative;
    min-width: 0;
    min-height: 0;
    padding: 3px;
  }
  .canvas {
    display: block;
    width: 100%;
    height: 100%;
  }
  .canvas text {
    font-family: 'Noto Sans', 'Noto Sans CJK SC', 'DejaVu Sans', sans-serif;
    text-anchor: middle;
    paint-order: stroke;
    stroke: rgba(255, 255, 255, 0.6);
    stroke-width: 2px;
    stroke-linejoin: round;
  }
  .canvas .c {
    font-size: 14px;
    fill: #333;
  }
  .canvas .s {
    font-size: 13px;
    font-style: italic;
    fill: #8d618b;
  }
  .canvas .p {
    font-size: 13px;
    fill: #8d618b;
  }
  .canvas .n {
    font-size: 16px;
    fill: #7d517c;
  }
  .actions {
    position: absolute;
    left: 28px;
    top: 14px;
    display: flex;
    gap: 13px;
  }
  .actions button {
    display: flex;
    align-items: center;
    gap: 6px;
    height: 40px;
    padding: 0 12px 0 11px;
    border: 0;
    border-radius: 11px;
    background: #1a73e8;
    box-shadow: 8px 8px 24px rgba(0, 0, 0, 0.3);
    color: #fff;
    font-family: 'Noto Sans', sans-serif;
    font-size: 14px;
  }
  footer {
    position: absolute;
    right: 3px;
    bottom: 3px;
    display: flex;
    align-items: center;
    gap: 11px;
    padding: 0 6px 0 19px;
    background: rgba(255, 255, 255, 0.8);
    color: #333;
    font-family: 'Liberation Sans', sans-serif;
    font-size: 14px;
    line-height: 21px;
  }
  footer a {
    color: #0078a8;
  }
  footer .bar {
    padding-left: 6px;
  }
  .devtools {
    position: fixed;
    left: 13px;
    bottom: 20px;
    padding: 0;
    border: 0;
    background: none;
    line-height: 0;
  }
</style>
